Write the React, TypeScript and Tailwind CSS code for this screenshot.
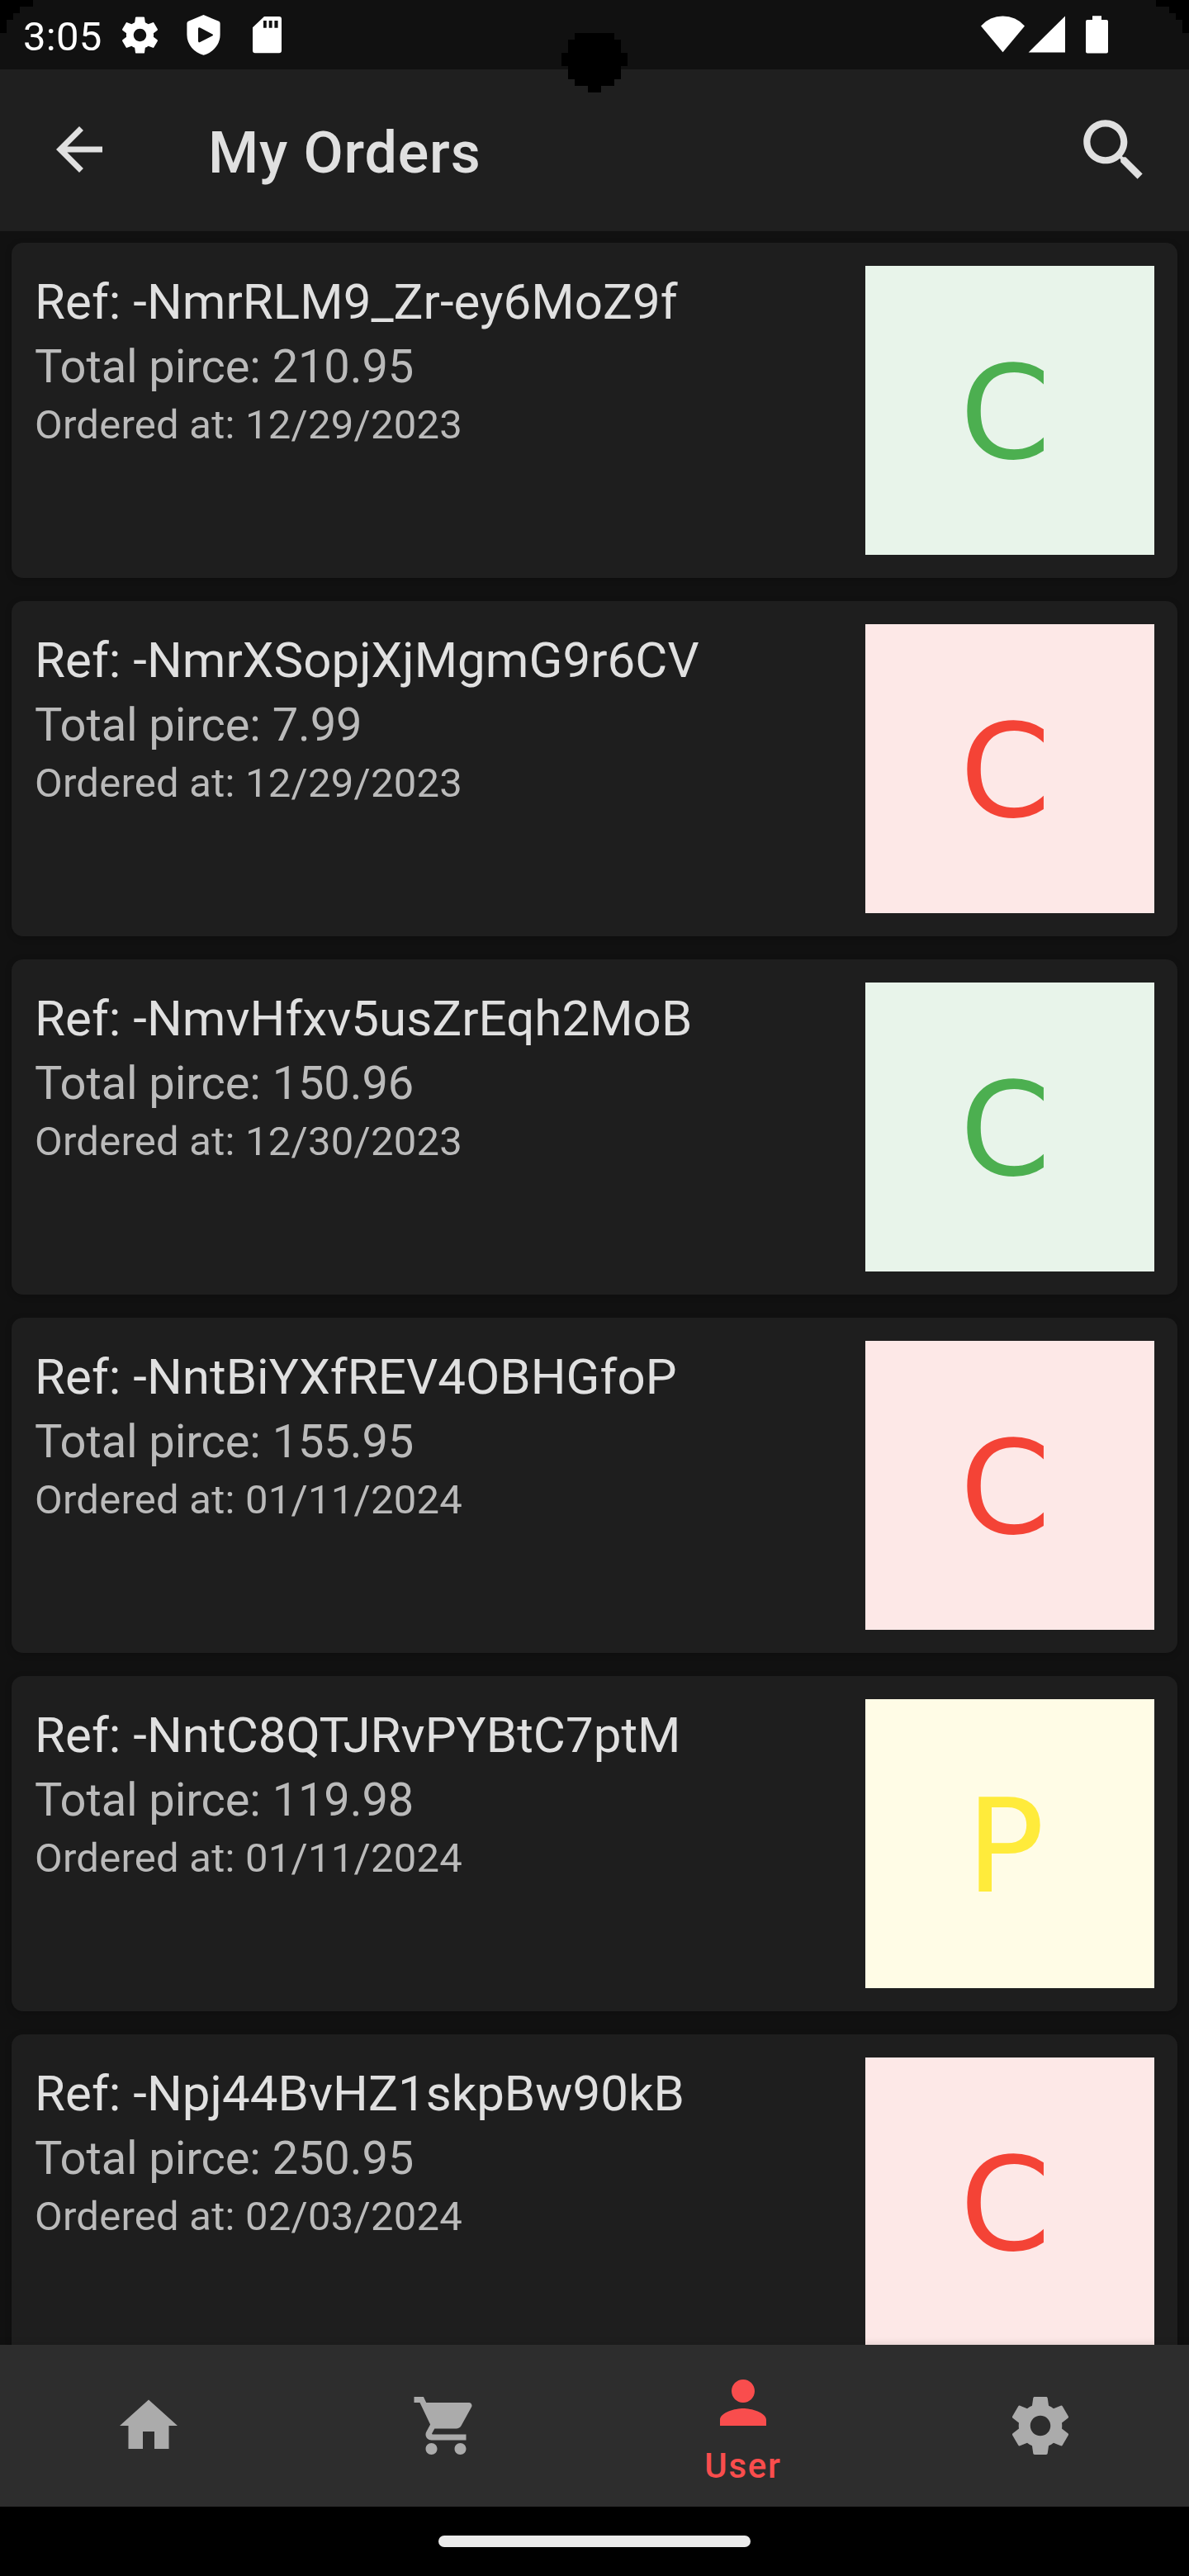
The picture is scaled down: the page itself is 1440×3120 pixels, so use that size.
import React from "react";

type Tone = "green" | "red" | "yellow";

const orders: { ref: string; total: string; date: string; letter: string; tone: Tone }[] = [
  { ref: "-NmrRLM9_Zr-ey6MoZ9f", total: "210.95", date: "12/29/2023", letter: "C", tone: "green" },
  { ref: "-NmrXSopjXjMgmG9r6CV", total: "7.99", date: "12/29/2023", letter: "C", tone: "red" },
  { ref: "-NmvHfxv5usZrEqh2MoB", total: "150.96", date: "12/30/2023", letter: "C", tone: "green" },
  { ref: "-NntBiYXfREV4OBHGfoP", total: "155.95", date: "01/11/2024", letter: "C", tone: "red" },
  { ref: "-NntC8QTJRvPYBtC7ptM", total: "119.98", date: "01/11/2024", letter: "P", tone: "yellow" },
  { ref: "-Npj44BvHZ1skpBw90kB", total: "250.95", date: "02/03/2024", letter: "C", tone: "red" },
];

const tones: Record<Tone, string> = {
  green: "bg-[#e8f4ea] text-[#4caf50]",
  red: "bg-[#fde8e7] text-[#f44336]",
  yellow: "bg-[#fffce6] text-[#ffeb3b]",
};

const GEAR =
  "M19.43 12.98c.04-.32.07-.64.07-.98s-.03-.66-.07-.98l2.11-1.65c.19-.15.24-.42.12-.64l-2-3.46c-.12-.22-.39-.3-.61-.22l-2.49 1c-.52-.4-1.08-.73-1.69-.98l-.38-2.65C14.46 2.18 14.25 2 14 2h-4c-.25 0-.46.18-.49.42l-.38 2.65c-.61.25-1.17.59-1.69.98l-2.49-1c-.23-.09-.49 0-.61.22l-2 3.46c-.13.22-.07.49.12.64l2.11 1.65c-.04.32-.07.65-.07.98s.03.66.07.98l-2.11 1.65c-.19.15-.24.42-.12.64l2 3.46c.12.22.39.3.61.22l2.49-1c.52.4 1.08.73 1.69.98l.38 2.65c.03.24.24.42.49.42h4c.25 0 .46-.18.49-.42l.38-2.65c.61-.25 1.17-.59 1.69-.98l2.49 1c.23.09.49 0 .61-.22l2-3.46c.12-.22.07-.49-.12-.64l-2.11-1.65zM12 15.5c-1.93 0-3.5-1.57-3.5-3.5s1.57-3.5 3.5-3.5 3.5 1.57 3.5 3.5-1.57 3.5-3.5 3.5z";
const BACK = "M20 11H7.83l5.59-5.59L12 4l-8 8 8 8 1.41-1.41L7.83 13H20v-2z";
const SEARCH =
  "M15.5 14h-.79l-.28-.27C15.41 12.59 16 11.11 16 9.5 16 5.91 13.09 3 9.5 3S3 5.91 3 9.5 5.91 16 9.5 16c1.61 0 3.09-.59 4.23-1.57l.27.28v.79l5 4.99L20.49 19l-4.99-5zm-6 0C7.01 14 5 11.99 5 9.5S7.01 5 9.5 5 14 7.01 14 9.5 11.99 14 9.5 14z";
const HOME = "M10 20v-6h4v6h5v-8h3L12 3 2 12h3v8z";
const CART =
  "M7 18c-1.1 0-1.99.9-1.99 2S5.9 22 7 22s2-.9 2-2-.9-2-2-2zM1 2v2h2l3.6 7.59-1.35 2.45c-.16.28-.25.61-.25.96 0 1.1.9 2 2 2h12v-2H7.42c-.14 0-.25-.11-.25-.25l.03-.12.9-1.63h7.45c.75 0 1.41-.41 1.75-1.03l3.58-6.49c.08-.14.12-.31.12-.48 0-.55-.45-1-1-1H5.21l-.94-2H1zm16 16c-1.1 0-1.99.9-1.99 2s.89 2 1.99 2 2-.9 2-2-.9-2-2-2z";
const PERSON =
  "M12 12c2.21 0 4-1.79 4-4s-1.79-4-4-4-4 1.79-4 4 1.79 4 4 4zm0 2c-2.67 0-8 1.34-8 4v2h16v-2c0-2.66-5.33-4-8-4z";

function Icon({ path, className }: { path: string; className: string }) {
  return (
    <svg viewBox="0 0 24 24" fill="currentColor" className={"shrink-0 " + className}>
      <path d={path} />
    </svg>
  );
}

function StatusBar() {
  return (
    <div className="relative flex h-[84px] shrink-0 items-center bg-[#111111] pr-[98px] pl-[28px] text-white">
      <span className="mt-[4px] w-[115px] text-[49px] leading-[57px] tracking-[0.3px]">3:05</span>
      <Icon path={GEAR} className="size-[53px]" />
      <svg viewBox="226 17 41 50" fill="currentColor" fillRule="evenodd" className="ml-[30px] h-[50px] w-[41px]">
        <path d="M246.5 18L265 25.8Q266.6 26.5 266.6 28.5V42C266.6 54 258 63.5 246.5 66.8C235 63.5 226.4 54 226.4 42V28.5Q226.4 26.5 228 25.8ZM240 34.8V49.6Q240 52.2 242.3 51L257 43.6Q259 42.4 257 41.2L242.3 33.5Q240 32.4 240 34.8Z" />
      </svg>
      <svg viewBox="306 19 36 46" fill="currentColor" fillRule="evenodd" className="ml-[39px] h-[46px] w-[36px]">
        <path d="M320 20H338Q341 20 341 23V61.2Q341 64.2 338 64.2H309Q306 64.2 306 61.2V33.2ZM319 25V33.8H322.8V25ZM325.7 25V33.8H329.6V25ZM332.4 25V33.8H336.6V25Z" />
      </svg>
      <svg viewBox="1188 17 54 50" fill="currentColor" className="ml-auto h-[50px] w-[54px]">
        <path d="M1188 31.4A35.3 35.3 0 0 1 1241 31.4L1214.5 63.2Z" />
      </svg>
      <svg viewBox="1245 17 45 50" fill="currentColor" className="ml-[3px] h-[50px] w-[45px]">
        <path d="M1245.6 63.5H1290V19.5Z" />
      </svg>
      <svg viewBox="1315 17 27 50" fill="currentColor" className="ml-[25px] h-[50px] w-[27px]">
        <path d="M1323 19.2H1334V24H1340Q1342 24 1342 26V62.5Q1342 64.5 1340 64.5H1317Q1315 64.5 1315 62.5V26Q1315 24 1317 24H1323Z" />
      </svg>

      {/* Camera cutout and rounded display corners */}
      <svg viewBox="0 0 80 80" className="absolute top-[32px] left-[680px] z-10 size-[80px]" fill="#000">
        <path d="M16 8H64V16H72V32H80V48H72V64H64V72H48V80H32V72H16V64H8V48H0V32H8V16H16Z" />
      </svg>
      <svg viewBox="0 0 40 40" className="absolute top-0 left-0 size-[40px]" fill="#000">
        <path d="M0 0H40V8H24V16H16V24H8V40H0Z" />
      </svg>
      <svg viewBox="0 0 40 40" className="absolute top-0 right-0 size-[40px]" fill="#000">
        <path d="M40 0H0V8H16V16H24V24H32V40H40Z" />
      </svg>
    </div>
  );
}

function AppBar() {
  return (
    <header className="flex h-[196px] shrink-0 items-center bg-[#1f1f1f] pr-[42px] pl-[54px] text-[#e0e0e0]">
      <Icon path={BACK} className="-mt-[3px] size-[84px]" />
      <h1 className="mt-[6px] ml-[114px] text-[70px] leading-[82px] font-medium tracking-[0.85px]">My Orders</h1>
      <Icon path={SEARCH} className="ml-auto size-[98px]" />
    </header>
  );
}

function OrderCard({ order }: { order: (typeof orders)[number] }) {
  return (
    <article className="flex h-[406px] shrink-0 justify-between rounded-[14px] bg-[#1e1e1e] p-[28px] shadow-[0_2px_8px_rgba(0,0,0,0.2)]">
      <div className="flex flex-col pt-2 whitespace-nowrap text-[#bababa]">
        <p className="text-[60px] leading-[71px] tracking-[0.05px] text-[#e0e0e0]">Ref: {order.ref}</p>
        <p className="mt-[10px] text-[56px] leading-[66px] tracking-[-0.1px]">Total pirce: {order.total}</p>
        <p className="mt-[9px] text-[49px] leading-[57px] tracking-[0.24px]">Ordered at: {order.date}</p>
      </div>
      <div className={"flex size-[350px] items-center justify-center pt-[6px] pr-[11px] " + tones[order.tone]}>
        <span className="font-['DejaVu_Sans',sans-serif] text-[157.5px] leading-[183px]">{order.letter}</span>
      </div>
    </article>
  );
}

function BottomNav() {
  return (
    <nav className="relative grid h-[196px] shrink-0 grid-cols-4 bg-[#2d2d2d] text-[#ababab] shadow-[0_0_10px_rgba(0,0,0,0.15)]">
      <div className="flex items-center justify-center">
        <Icon path={HOME} className="size-[84px]" />
      </div>
      <div className="flex items-center justify-center">
        <Icon path={CART} className="size-[84px]" />
      </div>
      <div className="flex flex-col items-center pt-[28px] text-[#f94d4d]">
        <Icon path={PERSON} className="size-[84px]" />
        <span className="mt-[10px] text-[42px] leading-[49px] font-medium tracking-[1.75px]">User</span>
      </div>
      <div className="flex items-center justify-center">
        <Icon path={GEAR} className="size-[84px]" />
      </div>
    </nav>
  );
}

export default function App() {
  return (
    <div className="flex h-[3120px] w-[1440px] flex-col overflow-hidden bg-[#111111] font-[Roboto,sans-serif]">
      <StatusBar />
      <AppBar />
      <main className="flex min-h-0 flex-1 flex-col gap-[28px] overflow-hidden px-[14px] pt-[14px]">
        {orders.map((order) => (
          <OrderCard key={order.ref} order={order} />
        ))}
      </main>
      <BottomNav />
      <div className="flex h-[84px] shrink-0 justify-center bg-black pt-[35px]">
        <div className="h-[14px] w-[378px] rounded-full bg-[#ebebeb]" />
      </div>
    </div>
  );
}
